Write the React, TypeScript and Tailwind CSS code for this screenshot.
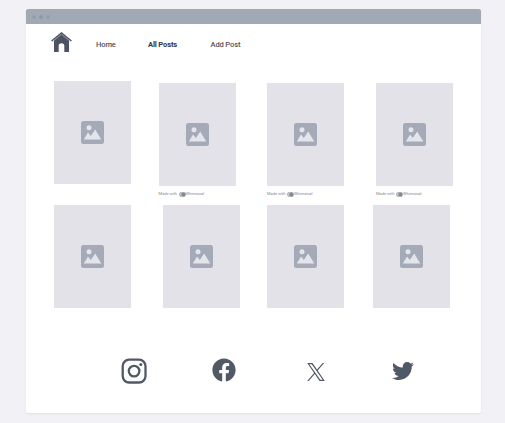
import React from "react";
import { FaFacebook, FaTwitter } from "react-icons/fa";

function HomeIcon() {
  return (
    <svg className="h-5 w-[21px] shrink-0" viewBox="0 0 21 20" fill="none">
      <path d="M3 8 10.5 1.8 18 8V20h-4.7v-6a2.8 2.8 0 0 0-5.6 0V20H3Z" fill="#4d5361" />
      <path d="M.6 9 10.5.9l9.9 8.1" stroke="#4d5361" strokeWidth="1.4" />
      <path d="M1.8 9.6 10.5 2.4l8.7 7.2" stroke="#a3a7b0" strokeWidth="0.6" />
    </svg>
  );
}

function InstagramIcon() {
  return (
    <svg className="h-[26px] w-[26px]" viewBox="0 0 26 26" fill="none" stroke="#525966" strokeWidth="2.3">
      <rect x="1.7" y="1.7" width="22.8" height="22.8" rx="6.4" />
      <circle cx="13.1" cy="13.1" r="5.3" />
      <circle cx="19.8" cy="6.5" r="1.6" fill="#525966" stroke="none" />
    </svg>
  );
}

function XIcon() {
  return (
    <svg className="mt-[5px] ml-[71px] h-[18px] w-[18px]" viewBox="0 0 1200 1227" fill="currentColor">
      <path d="M714.163 519.284L1160.89 0H1055.03L667.137 450.887L357.328 0H0L468.492 681.821L0 1226.37H105.866L515.491 750.218L842.672 1226.37H1200L714.137 519.284H714.163ZM569.165 687.828L521.697 619.934L144.011 79.6944H306.615L611.412 515.685L658.88 583.579L1055.08 1150.3H892.476L569.165 687.854V687.828Z" />
    </svg>
  );
}

function ImageTile() {
  return (
    <div className="flex h-[103px] w-[77px] items-center justify-center bg-[#e2e2e8]">
      <svg className="h-[23px] w-[23px]" viewBox="0 0 23 23">
        <rect width="23" height="23" rx="2.5" fill="#a4aab7" />
        <circle cx="8" cy="6.8" r="2.5" fill="#e4e5eb" />
        <path d="M2.8 18.4 7 11.6l2.8 3.5 4.4-6.7 6.1 10Z" fill="#e4e5eb" />
      </svg>
    </div>
  );
}

function Credit() {
  return (
    <div className="mt-[5px] flex h-[6px] items-center text-[4px] leading-[6px] whitespace-nowrap text-[#85888f]">
      <span className="w-[20px]">Made with</span>
      <svg className="h-[5px] w-[7px]" viewBox="0 0 7 5">
        <rect x=".3" y=".3" width="6.4" height="4.4" rx="2.2" fill="#c5c8cc" stroke="#8b9098" strokeWidth=".5" />
        <circle cx="4.3" cy="2.5" r="2" fill="#858a92" />
      </svg>
      <span>Whimsical</span>
    </div>
  );
}

export default function App() {
  return (
    <div className="h-[423px] w-[505px] overflow-hidden bg-[#f2f2f6] px-[26px] pt-[9px] font-[family-name:Roboto,'Liberation_Sans',sans-serif]">
      <main className="h-[404px] w-[455px] overflow-hidden rounded-[2px] bg-white shadow-[0_1px_2px_#dedfe5]">
        <header className="flex h-[15px] items-center gap-[3px] bg-[#a1a9b5] pl-[6px]">
          <i className="h-[4px] w-[4px] rounded-full bg-[#959dab]" />
          <i className="h-[4px] w-[4px] rounded-full bg-[#8f97a5]" />
          <i className="h-[4px] w-[4px] rounded-full bg-[#959dab]" />
        </header>
        <nav className="flex h-[57px] items-start pt-[8px] pl-[25px] text-[7.6px] leading-[10px] font-medium tracking-[-0.16px] text-[#50535b]">
          <HomeIcon />
          <a className="mt-[8px] ml-[24px] w-[52px]">Home</a>
          <a className="mt-[8px] w-[62.5px] font-bold text-[#32353e]">All Posts</a>
          <a className="mt-[8px]">Add Post</a>
        </nav>
        <section className="flex h-[124px] pl-[28px]">
          <ImageTile />
          <div className="mt-[2px] ml-[27.5px]"><ImageTile /><Credit /></div>
          <div className="mt-[2px] ml-[31.5px]"><ImageTile /><Credit /></div>
          <div className="mt-[2px] ml-[32px]"><ImageTile /><Credit /></div>
        </section>
        <section className="flex pl-[28px]">
          <ImageTile />
          <div className="ml-[31.5px]"><ImageTile /></div>
          <div className="ml-[27.5px]"><ImageTile /></div>
          <div className="ml-[28.5px]"><ImageTile /></div>
        </section>
        <footer className="mt-[50px] flex items-start pl-[95px] text-[#525966]">
          <InstagramIcon />
          <FaFacebook className="ml-[65px] h-6 w-6" />
          <XIcon />
          <FaTwitter className="mt-[2px] ml-[67px] h-[22px] w-[22px]" />
        </footer>
      </main>
    </div>
  );
}
